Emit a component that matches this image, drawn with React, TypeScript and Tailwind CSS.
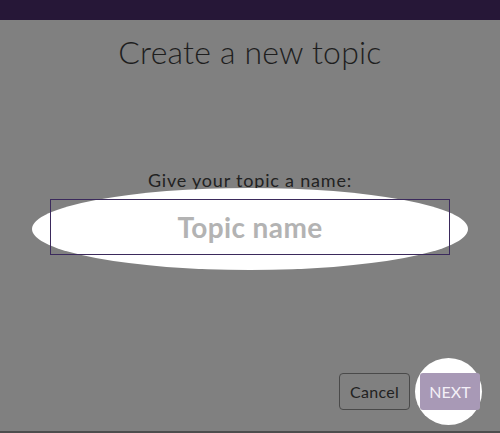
import React from "react";

export default function App() {
  return (
    <div
      className="relative flex h-[433px] w-[500px] flex-col overflow-hidden bg-[#808080]"
      style={{ fontFamily: "Lato, 'Noto Sans', sans-serif" }}
    >
      <div className="h-5 w-full shrink-0 bg-[#261737]" />
      <h1 className="mt-[14px] text-center text-[32px] font-light leading-[36px] tracking-[0.2px] text-[#1e1e1e]">
        Create a new topic
      </h1>
      <div className="mt-[100px] text-center text-[18px] leading-[20px] tracking-[0.8px] text-[#222]">
        Give your topic a name:
      </div>
      <div className="relative mx-[50px] mt-[9px] h-[56px]">
        <div className="absolute left-[-18px] top-[-11px] h-[82px] w-[436px] rounded-[50%] bg-white" />
        <div className="relative flex h-full items-center justify-center border border-[#3b2a5c]">
          <span className="text-[28px] font-bold tracking-[0.4px] text-[#b3b3b3]">Topic name</span>
        </div>
      </div>
      <div className="mt-auto flex justify-end gap-[10px] pb-[21px] pr-[20px]">
        <button className="h-[37px] w-[71px] rounded-[4px] border border-[#4a4a4a] text-[16px] tracking-[0.3px] text-[#222]">
          Cancel
        </button>
        <div className="relative h-[37px] w-[60px]">
          <div className="absolute left-[-5px] top-[-15px] h-[67px] w-[67px] rounded-full bg-white" />
          <button className="relative h-full w-full rounded-[3px] bg-[#a899b6] text-[16px] text-[#f4f0f7]">
            NEXT
          </button>
        </div>
      </div>
      <div className="h-[2px] w-full shrink-0 bg-[#4d4d4d]" />
    </div>
  );
}
